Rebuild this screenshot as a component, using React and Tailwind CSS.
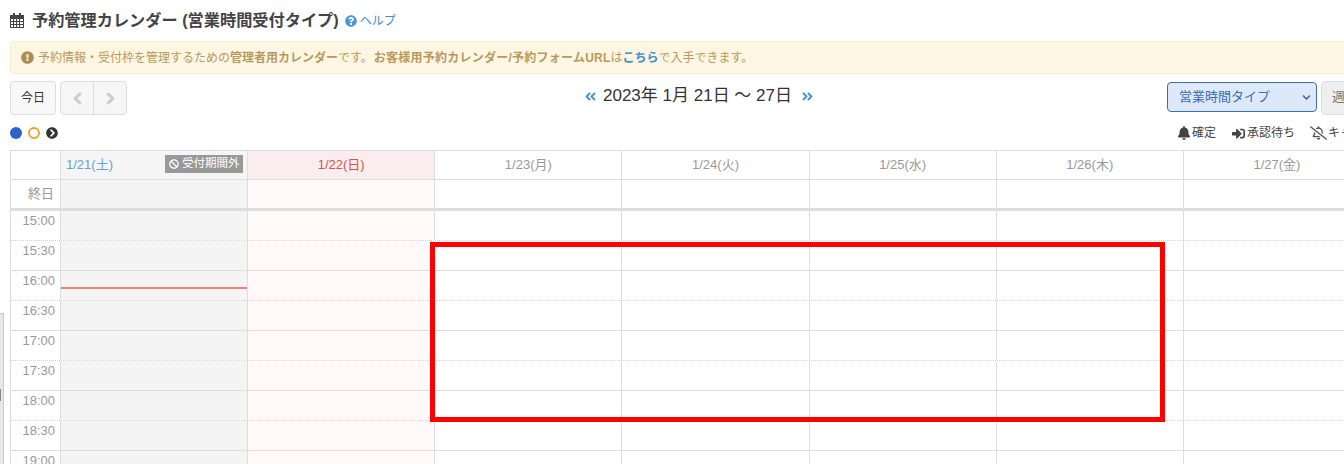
import React from 'react';
import {
  FaAngleDoubleLeft,
  FaAngleDoubleRight,
  FaBan,
  FaBell,
  FaChevronCircleRight,
  FaChevronDown,
  FaChevronLeft,
  FaChevronRight,
  FaExclamationCircle,
  FaQuestionCircle,
  FaRegBellSlash,
  FaSignInAlt,
} from 'react-icons/fa';

const DAYS = [
  { label: '1/21(土)', head: 'bg-[#f5f5f5] text-[#6a9fd0] text-left pl-[5px]', cell: 'bg-[#f4f4f4]', closed: true },
  { label: '1/22(日)', head: 'bg-[#fbeded] text-[#d9534f]', cell: 'bg-[#fff9f9]' },
  { label: '1/23(月)', head: 'text-[#999]', cell: 'bg-white' },
  { label: '1/24(火)', head: 'text-[#999]', cell: 'bg-white' },
  { label: '1/25(水)', head: 'text-[#999]', cell: 'bg-white' },
  { label: '1/26(木)', head: 'text-[#999]', cell: 'bg-white' },
  { label: '1/27(金)', head: 'text-[#999]', cell: 'bg-white' },
];

const TIMES = ['15:00', '15:30', '16:00', '16:30', '17:00', '17:30', '18:00', '18:30', '19:00'];

const GRID = 'grid grid-cols-[50px_repeat(7,187.15px)] w-[1360px]';

const CalendarIcon = () => (
  <svg viewBox="0 0 14 15" className="mr-[8px] h-[15px] w-[14px] shrink-0 text-[#444]" fill="currentColor">
    <rect x="3" y="0" width="2" height="3" />
    <rect x="9" y="0" width="2" height="3" />
    <path d="M0 2h14v13H0z M1 6v2h2V6z M4 6v2h2V6z M7 6v2h2V6z M10 6v2h3V6z M1 9v2h2V9z M4 9v2h2V9z M7 9v2h2V9z M10 9v2h3V9z M1 12v2h2v-2z M4 12v2h2v-2z M7 12v2h2v-2z M10 12v2h3v-2z" fillRule="evenodd" />
  </svg>
);

const TimeRow = ({ time, index }) => {
  // even rows end on a dotted half hour line, odd rows on a solid hour line
  const line = index % 2 === 0 ? 'border-b border-dotted border-[#d4d4d4]' : 'border-b border-[#ddd]';

  return (
    <div className={`${GRID} h-[30px] ${line}`}>
      <div className="border-l border-[#ddd] pr-[5px] pt-[1px] text-right text-[13px] leading-[17px] text-[#999]">
        {time}
      </div>
      {DAYS.map((day, i) => (
        <div key={day.label} className={`relative border-l border-[#ddd] ${day.cell}`}>
          {/* current time marker */}
          {i === 0 && time === '16:00' && (
            <div className="absolute left-0 right-0 top-[16px] h-[2px] bg-[#e0897c]" />
          )}
        </div>
      ))}
    </div>
  );
};

const App = () => {
  return (
    <div className="relative h-[464px] w-[1344px] overflow-hidden bg-white pl-[10px] font-['Liberation_Sans','Noto_Sans_CJK_JP',sans-serif] text-[#333]">
      {/* title */}
      <div className="flex h-[41px] items-center">
        <CalendarIcon />
        <h1 className="text-[16.2px] font-bold text-[#444]">予約管理カレンダー (営業時間受付タイプ)</h1>
        <FaQuestionCircle className="ml-[6px] h-[12px] w-[12px] text-[#4a97d8]" />
        <a className="ml-[3px] text-[12px] text-[#3a8fd0]">ヘルプ</a>
      </div>

      {/* notice */}
      <div className="flex h-[33px] w-[1400px] items-center rounded-[4px] border border-[#faebcc] bg-[#fcf6e3] pl-[10px] text-[12px] text-[#b89a5e]">
        <FaExclamationCircle className="mr-[4px] h-[13px] w-[13px] text-[#b08d50]" />
        <span>予約情報・受付枠を管理するための</span>
        <b>管理者用カレンダー</b>
        <span>です。</span>
        <b className="ml-[1px] tracking-[0.24px]">お客様用予約カレンダー/予約フォームURL</b>
        <span>は</span>
        <a className="font-bold text-[#3a8fc8]">こちら</a>
        <span>で入手できます。</span>
      </div>

      {/* toolbar */}
      <div className="relative mt-[7px] flex h-[34px] w-[1400px] items-start">
        <button className="h-[34px] w-[46px] rounded-[4px] border border-[#ddd] bg-[#f8f8f8] text-[12px] text-[#333]">
          今日
        </button>
        <div className="ml-[4px] flex h-[34px] w-[67px] rounded-[4px] border border-[#ddd] bg-[#f6f6f6] text-[#ccc]">
          <div className="flex w-[33px] items-center justify-center border-r border-[#ddd]">
            <FaChevronLeft className="h-[13px] w-[13px] stroke-current stroke-[40]" />
          </div>
          <div className="flex flex-1 items-center justify-center">
            <FaChevronRight className="h-[13px] w-[13px] stroke-current stroke-[40]" />
          </div>
        </div>
        <div className="ml-[457px] flex h-[30px] items-center text-[17px] text-[#333]">
          <FaAngleDoubleLeft className="mr-[6px] h-[13px] w-[13px] text-[#4a97d0]" />
          <span>2023年 1月 21日 ～ 27日</span>
          <FaAngleDoubleRight className="ml-[9px] h-[13px] w-[13px] text-[#4a97d0]" />
        </div>
        <div className="ml-auto mr-[49px] flex items-start">
          <div className="mt-[1px] flex h-[30px] w-[150px] items-center justify-between rounded-[4px] border border-[#3a6fb5] bg-[#dde8f8] pl-[11px] pr-[5px] text-[13px] text-[#3a6fb5]">
            <span>営業時間タイプ</span>
            <FaChevronDown className="h-[9px] w-[9px] text-[#2f5f9f]" />
          </div>
          <button className="ml-[4px] h-[34px] w-[40px] rounded-[4px] border border-[#ddd] bg-[#eee] pb-[2px] pl-[10px] text-left text-[13px] text-[#777]">
            週
          </button>
        </div>
      </div>

      {/* legend */}
      <div className="mt-[6px] flex h-[24px] w-[1400px] items-center">
        <span className="h-[12px] w-[12px] rounded-full bg-[#2f62c8]" />
        <span className="ml-[6px] h-[12px] w-[12px] rounded-full border-2 border-[#eba52a]" />
        <FaChevronCircleRight className="ml-[6px] h-[12px] w-[12px] text-[#333]" />
        <div className="ml-[1119px] flex items-center text-[12px] text-[#444]">
          <FaBell className="h-[14px] w-[14px] text-[#444]" />
          <span className="ml-[1px]">確定</span>
          <FaSignInAlt className="ml-[16px] h-[13px] w-[13px] text-[#444]" />
          <span className="ml-[2px]">承認待ち</span>
          <FaRegBellSlash className="ml-[15px] h-[14px] w-[17px] text-[#555]" />
          <span className="ml-[1px]">キャンセル</span>
        </div>
      </div>

      {/* calendar head */}
      <div className={`${GRID} mt-[5px] h-[30px] border-y border-[#ddd]`}>
        <div className="border-l border-[#ddd]" />
        {DAYS.map((day) => (
          <div
            key={day.label}
            className={`relative border-l border-[#ddd] text-center text-[13px] leading-[28px] ${day.head}`}
          >
            {day.label}
            {day.closed && (
              <span className="absolute right-[4px] top-[4px] flex h-[18px] w-[78px] items-center justify-center bg-[#999] text-[11.5px] leading-none text-white">
                <FaBan className="mr-[3px] h-[10px] w-[10px]" />
                受付期間外
              </span>
            )}
          </div>
        ))}
      </div>
      <div className={`${GRID} h-[31px] border-b-[3px] border-[#ddd]`}>
        <div className="border-l border-[#ddd] pr-[6px] text-right text-[13px] leading-[28px] text-[#999]">終日</div>
        {DAYS.map((day) => (
          <div key={day.label} className={`border-l border-[#ddd] ${day.cell}`} />
        ))}
      </div>

      {/* time slots */}
      {TIMES.map((time, index) => (
        <TimeRow key={time} time={time} index={index} />
      ))}

      {/* strip of the window behind */}
      <div className="absolute bottom-0 left-0 top-[313px] w-[4px] border-r border-t border-[#ccc] bg-[#e8e8e8]">
        <div className="mt-[75px] h-[12px] w-[1px] bg-[#888]" />
      </div>

      {/* annotation box */}
      <div className="absolute left-[430px] top-[242px] h-[180px] w-[735px] border-[5px] border-[#f00]" />
    </div>
  );
};

export default App;
